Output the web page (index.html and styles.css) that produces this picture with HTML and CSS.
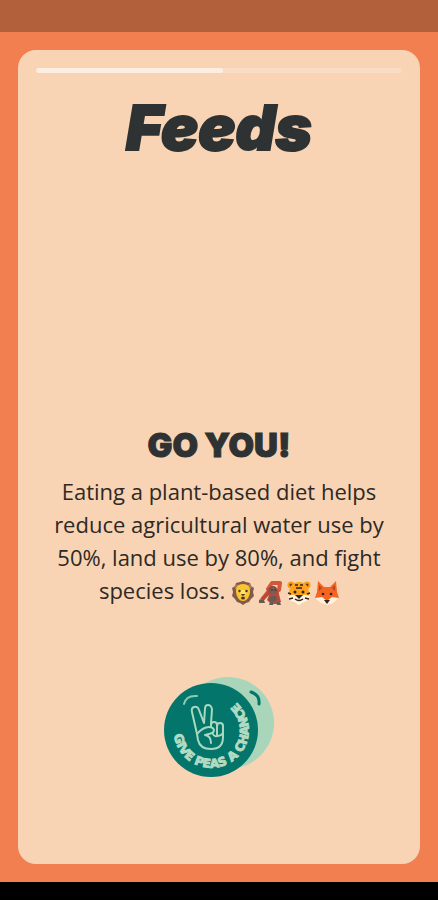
FILE: index.html
```html
<!DOCTYPE html>
<html lang="en">
<head>
<meta charset="utf-8">
<meta name="viewport" content="width=device-width, initial-scale=1">
<title>Feeds</title>
<link rel="stylesheet" href="styles.css">
</head>
<body>
<div class="status-bar"></div>
<main class="screen">
  <article class="card">
    <div class="progress" role="progressbar" aria-label="Story progress" aria-valuenow="51" aria-valuemin="0" aria-valuemax="100"><div class="progress-fill"></div></div>
    <h1 class="title">Feeds</h1>
    <section class="message">
      <h2 class="heading">GO YOU!</h2>
      <p class="copy">Eating a plant-based diet helps<br>reduce agricultural water use by<br>50%, land use by 80%, and fight<br>species loss.
        <span class="animals">
          <svg class="animal" viewBox="0 0 24 24" aria-hidden="true">
            <path fill="#805b4b" d="M12 0 15 1 19 2 20 5 23 7 22 11 23 15 20 18 18 21 15 22 12 24 9 22 6 21 4 18 1 15 2 11 1 7 4 5 5 2 9 1Z"/>
            <circle cx="6" cy="6" r="2.500" fill="#a9805a"/><circle cx="18" cy="6" r="2.500" fill="#a9805a"/>
            <path fill="#fbc52d" d="M12 3c5 0 7 3 7 7 0 5-3 10-7 10s-7-5-7-10c0-4 2-7 7-7Z"/>
            <path fill="#ffe36a" d="M10 9h4l1 5H9Z"/><circle cx="8.500" cy="10" r="1.200" fill="#42352d"/><circle cx="15.500" cy="10" r="1.200" fill="#42352d"/>
            <path fill="#4b3930" d="M9.500 13h5L12 15Z"/><ellipse cx="12" cy="17" rx="2" ry="1.500" fill="#4b3930"/>
          </svg>
          <svg class="animal" viewBox="0 0 24 24" aria-hidden="true">
            <path fill="none" stroke="#d2583c" stroke-width="4" stroke-linecap="round" stroke-linejoin="round" d="M9 8 13 2 21 2 20 9M9 11 2 20"/>
            <path fill="#b8493a" d="M9 7c5-3 11 0 11 6l2 8-5 2h-5l-4-4 2-5-6 6-2-3 6-6Z"/>
            <circle cx="14" cy="9" r="4" fill="#8d4938"/><ellipse cx="14" cy="10" rx="3" ry="3.500" fill="#75605a"/>
            <path fill="#665a55" d="M12 15h5l1 4-4 2-4-1ZM0 19h5l1 3H0ZM11 21h4l-1 3h-4ZM17 21h4l1 3h-4Z"/>
            <circle cx="13" cy="9" r=".7" fill="#222"/><circle cx="16" cy="9" r=".7" fill="#222"/>
          </svg>
          <svg class="animal" viewBox="0 0 24 24" aria-hidden="true">
            <circle cx="4" cy="4" r="3.500" fill="#fb9e16"/><circle cx="20" cy="4" r="3.500" fill="#fb9e16"/><circle cx="4" cy="4" r="1.500" fill="#5a3a1e"/><circle cx="20" cy="4" r="1.500" fill="#5a3a1e"/>
            <path fill="#ffa51d" d="M12 1c7 0 10 5 10 11s-4 11-10 11S2 18 2 12 5 1 12 1Z"/>
            <path fill="#fff3dc" d="M1 16c3-3 7-3 11 0 4-3 8-3 11 0l-3 4-8 4-8-4Z"/>
            <path fill="none" stroke="#2c241d" stroke-width="1.500" d="M8 4h3M13 4h3M9 7h6M1 12l3 1M23 12l-3 1M2 18l4-1M22 18l-4-1M8 18q4 3 8 0"/>
            <circle cx="8" cy="11" r="1.500" fill="#2c241d"/><circle cx="16" cy="11" r="1.500" fill="#2c241d"/><path fill="#2c241d" d="M8 14h8l-4 4Z"/>
          </svg>
          <svg class="animal" viewBox="0 0 24 24" aria-hidden="true">
            <path fill="#f56423" d="M3 0 9 6h6l6-6 1 11 2 6-7 3-5 3-5-3-7-3 2-6Z"/>
            <path fill="#b84524" d="m4 4 3 3-3 3ZM20 4l-3 3 3 3Z"/>
            <path fill="#fff1dc" d="m0 17 7-1 5 4 5-4 7 1-6 5-6 2-6-2Z"/>
            <circle cx="8" cy="13" r="1.300" fill="#30221e"/><circle cx="16" cy="13" r="1.300" fill="#30221e"/><path fill="#30221e" d="M9 19h6l-3 4Z"/>
          </svg>
        </span>
      </p>
    </section>
    <svg class="badge" viewBox="164 676 110 101" role="img" aria-label="Give peas a chance">
      <circle cx="228" cy="722" r="46" fill="#a9d5bb"/>
      <circle cx="211" cy="729" r="47" fill="#03756b"/>
      <path class="shine" d="M184 703q2-9 13-8"/>
      <path class="shine dark" d="M251 691q9 3 8 12"/>
      <path id="slogan" fill="none" d="M174 734A37.500 37.500 0 1 0 216 692"/>
      <text class="slogan"><textPath href="#slogan">GIVE PEAS A CHANCE</textPath></text>
      <g class="hand">
        <path d="M197 733 192 711q-1-4 2-5 4-1 5 3l5 13 1-14q0-4 3-4t4 4l-1 15"/>
        <path d="M211 726v-2q0-3 3-3t3 3v10M217 725q0-3 3-3t3 3v11q0 12-12 12-11 0-13-9l-1-6q6-7 12-7 4 0 5 3 0 3-5 4l-4 1q6 1 6 8M213 733q1 3 4 2 4 0 6-3"/>
      </g>
    </svg>
  </article>
</main>
<div class="nav-bar"></div>
</body>
</html>
```
FILE: styles.css
```css
* { box-sizing: border-box; }
body {
  margin: 0;
  min-height: 100vh;
  display: flex;
  flex-direction: column;
  background: #f17f50;
  color: #2e3233;
  font-family: "Open Sans", "Noto Sans", sans-serif;
}
.status-bar { height: 32px; background: #b25f3c; }
.nav-bar { height: 18px; background: #000; }
.screen { flex: 1; display: flex; padding: 18px; }
.card {
  flex: 1;
  display: flex;
  flex-direction: column;
  align-items: center;
  padding: 18px 18px 86px;
  border-radius: 18px;
  background: #f8d4b4;
}
.progress { width: 100%; height: 5px; border-radius: 3px; background: #f8dcc4; overflow: hidden; }
.progress-fill { width: 51%; height: 100%; border-radius: 3px; background: #fceee0; }
.title, .heading {
  margin: 0;
  font-family: Inter, sans-serif;
  font-weight: 900;
  stroke-linejoin: round;
}
.title { margin-top: 20px; font-size: 62px; line-height: 70px; font-style: italic; -webkit-text-stroke: 2px #2e3233; }
.message { margin-top: auto; text-align: center; }
.heading { font-size: 33px; line-height: 36px; -webkit-text-stroke: 1px #2e3233; }
.copy { margin: 12px 0 0; font-size: 22px; line-height: 33px; font-weight: 500; color: #2e2925; white-space: nowrap; }
.animals { display: inline-flex; gap: 4px; vertical-align: middle; }
.animal { width: 24px; height: 24px; }
.badge { width: 110px; height: 101px; margin-top: 70px; }
.shine { fill: none; stroke: #8bcbb0; stroke-width: 2; stroke-linecap: round; }
.shine.dark { stroke: #03756b; stroke-width: 3; }
.slogan { font: 700 12px "DejaVu Sans", sans-serif; fill: #b1dbc3; stroke: #b1dbc3; stroke-width: 1; }
.hand { fill: none; stroke: #a8d8bd; stroke-width: 2; stroke-linecap: round; stroke-linejoin: round; }
```
